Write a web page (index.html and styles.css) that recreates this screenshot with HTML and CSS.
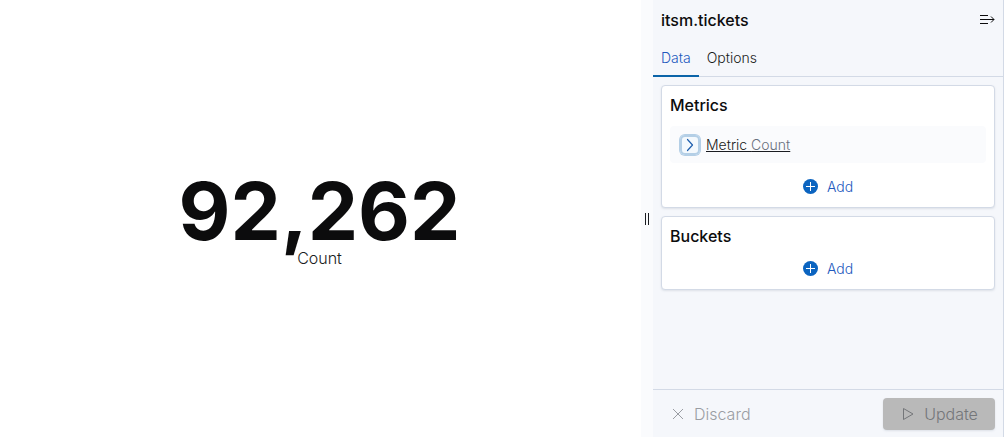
FILE: index.html
```html
<!DOCTYPE html>
<html lang="en">
<head>
<meta charset="utf-8">
<title>itsm.tickets</title>
<link rel="stylesheet" href="styles.css">
</head>
<body>
<div class="editor">
  <main class="chart">
    <div class="metric-value">92,262</div>
    <div class="metric-label">Count</div>
  </main>
  <button class="resizer" type="button" aria-label="Resize panel"></button>
  <aside class="sidebar">
    <header class="sidebar-header">
      <h2 class="title">itsm.tickets</h2>
      <button class="collapse" type="button" aria-label="Collapse sidebar">
        <svg width="16" height="16" viewBox="0 0 16 16" fill="none" stroke="currentColor"><path d="M1 3.500h8M1 7.500h14M1 11.500h8M12 4.500l3 3-3 3"/></svg>
      </button>
    </header>
    <nav class="tabs" role="tablist">
      <button class="tab tab-selected" type="button" role="tab" aria-selected="true">Data</button>
      <button class="tab" type="button" role="tab" aria-selected="false">Options</button>
    </nav>
    <div class="groups">
      <section class="card">
        <h3 class="title">Metrics</h3>
        <button class="agg" type="button" aria-expanded="false">
          <span class="agg-arrow"><svg width="16" height="16" viewBox="0 0 16 16" fill="none" stroke="currentColor" stroke-width="1.200"><path d="M5.500 2.500l5 5.500-5 5.500" stroke-linecap="round" stroke-linejoin="round"/></svg></span>
          <span class="agg-text">Metric <span class="agg-type">Count</span></span>
        </button>
        <button class="add" type="button">
          <svg width="16" height="16" viewBox="0 0 16 16"><circle cx="7.500" cy="7.500" r="7.500" fill="#0b64c0"/><path d="M7.500 3v9M3 7.500h9" stroke="#fff"/></svg>
          Add
        </button>
      </section>
      <section class="card">
        <h3 class="title">Buckets</h3>
        <button class="add" type="button">
          <svg width="16" height="16" viewBox="0 0 16 16"><circle cx="7.500" cy="7.500" r="7.500" fill="#0b64c0"/><path d="M7.500 3v9M3 7.500h9" stroke="#fff"/></svg>
          Add
        </button>
      </section>
    </div>
    <footer class="actions">
      <button class="action discard" type="button" disabled>
        <svg width="16" height="16" viewBox="0 0 16 16" fill="none" stroke="currentColor"><path d="M3 3l10 10M13 3L3 13"/></svg>
        Discard
      </button>
      <button class="action update" type="button" disabled>
        <svg width="16" height="16" viewBox="0 0 16 16" fill="none" stroke="currentColor" stroke-linejoin="round"><path d="M3.500 2.500v11l9.500-5.500z"/></svg>
        Update
      </button>
    </footer>
  </aside>
</div>
</body>
</html>
```
FILE: styles.css
```css
*,
*::before {
  box-sizing: border-box;
}

body {
  margin: 0;
  background: #fff;
  color: #1a1c21;
  font: 300 14px/20px Inter, "Liberation Sans", sans-serif;
}

button {
  padding: 0;
  border: 0;
  background: none;
  color: inherit;
  font: inherit;
  cursor: pointer;
}

svg {
  display: block;
  flex: none;
}

.editor {
  display: grid;
  grid-template-columns: 1fr 12px 351px;
  min-height: 100vh;
}

.chart {
  display: flex;
  flex-direction: column;
  align-items: center;
  justify-content: center;
  padding: 0 2px 2px 0;
}

.metric-value {
  color: #0c0c0d;
  font-size: 80px;
  font-weight: 700;
  line-height: 80px;
}

.metric-label {
  font-size: 16px;
  line-height: 14px;
}

.resizer {
  display: flex;
  align-items: center;
  justify-content: center;
  background: #fafbfd;
  cursor: col-resize;
}

.resizer::before {
  content: "";
  width: 4px;
  height: 12px;
  border: solid #1a1c21;
  border-width: 0 1px;
}

.sidebar {
  display: flex;
  flex-direction: column;
  border-right: 1px solid #d3dae6;
  background: #f5f7fb;
}

.sidebar-header {
  display: flex;
  align-items: center;
  justify-content: space-between;
  height: 40px;
  padding: 0 8px;
}

.title {
  margin: 0;
  color: #0c0c0d;
  font-size: 16px;
  font-weight: 500;
  line-height: 22px;
}

.collapse {
  color: #0c0c0d;
}

.tabs {
  display: flex;
  height: 37px;
  border-bottom: 1px solid #d3dae6;
}

.tab {
  height: 37px;
  padding: 0 8px;
  border-bottom: 2px solid transparent;
}

.tab-selected {
  border-color: #0b64a8;
  color: #2259bd;
}

.groups {
  display: flex;
  flex: 1;
  flex-direction: column;
  gap: 8px;
  padding: 8px;
}

.card {
  display: flex;
  flex-direction: column;
  padding: 8px 8px 4px;
  border: 1px solid #d3dae6;
  border-radius: 4px;
  background: #fff;
  box-shadow: 0 1px 2px #98a2b340;
}

.card .title {
  margin-bottom: 6px;
}

.agg {
  display: flex;
  align-items: center;
  gap: 6px;
  height: 37px;
  margin: 4px 0 8px;
  padding: 0 10px;
  border-radius: 4px;
  background: #fafbfd;
}

.agg-arrow {
  display: grid;
  place-items: center;
  width: 20px;
  height: 20px;
  border-radius: 5px;
  background: #f4f9fd;
  box-shadow: 0 0 0 1px #b4cfe6, inset 0 0 0 2px #b4cfe6;
  color: #1f5fae;
}

.agg-text {
  text-decoration: underline;
}

.agg-type {
  color: #69707d;
}

.add {
  display: flex;
  align-items: center;
  align-self: center;
  gap: 8px;
  height: 32px;
  padding: 0 8px;
  color: #2259bd;
}

.actions {
  display: flex;
  justify-content: space-between;
  padding: 8px 8px 7px;
  border-top: 1px solid #d3dae6;
}

.action {
  display: flex;
  align-items: center;
  justify-content: center;
  gap: 8px;
  height: 32px;
  border-radius: 4px;
  font-size: 16px;
  cursor: not-allowed;
}

.discard {
  padding: 0 9px;
  color: #9a9da3;
}

.update {
  min-width: 112px;
  background: #b9b9b9;
  box-shadow: 0 1px 2px #98a2b340;
  color: #747679;
}
```
